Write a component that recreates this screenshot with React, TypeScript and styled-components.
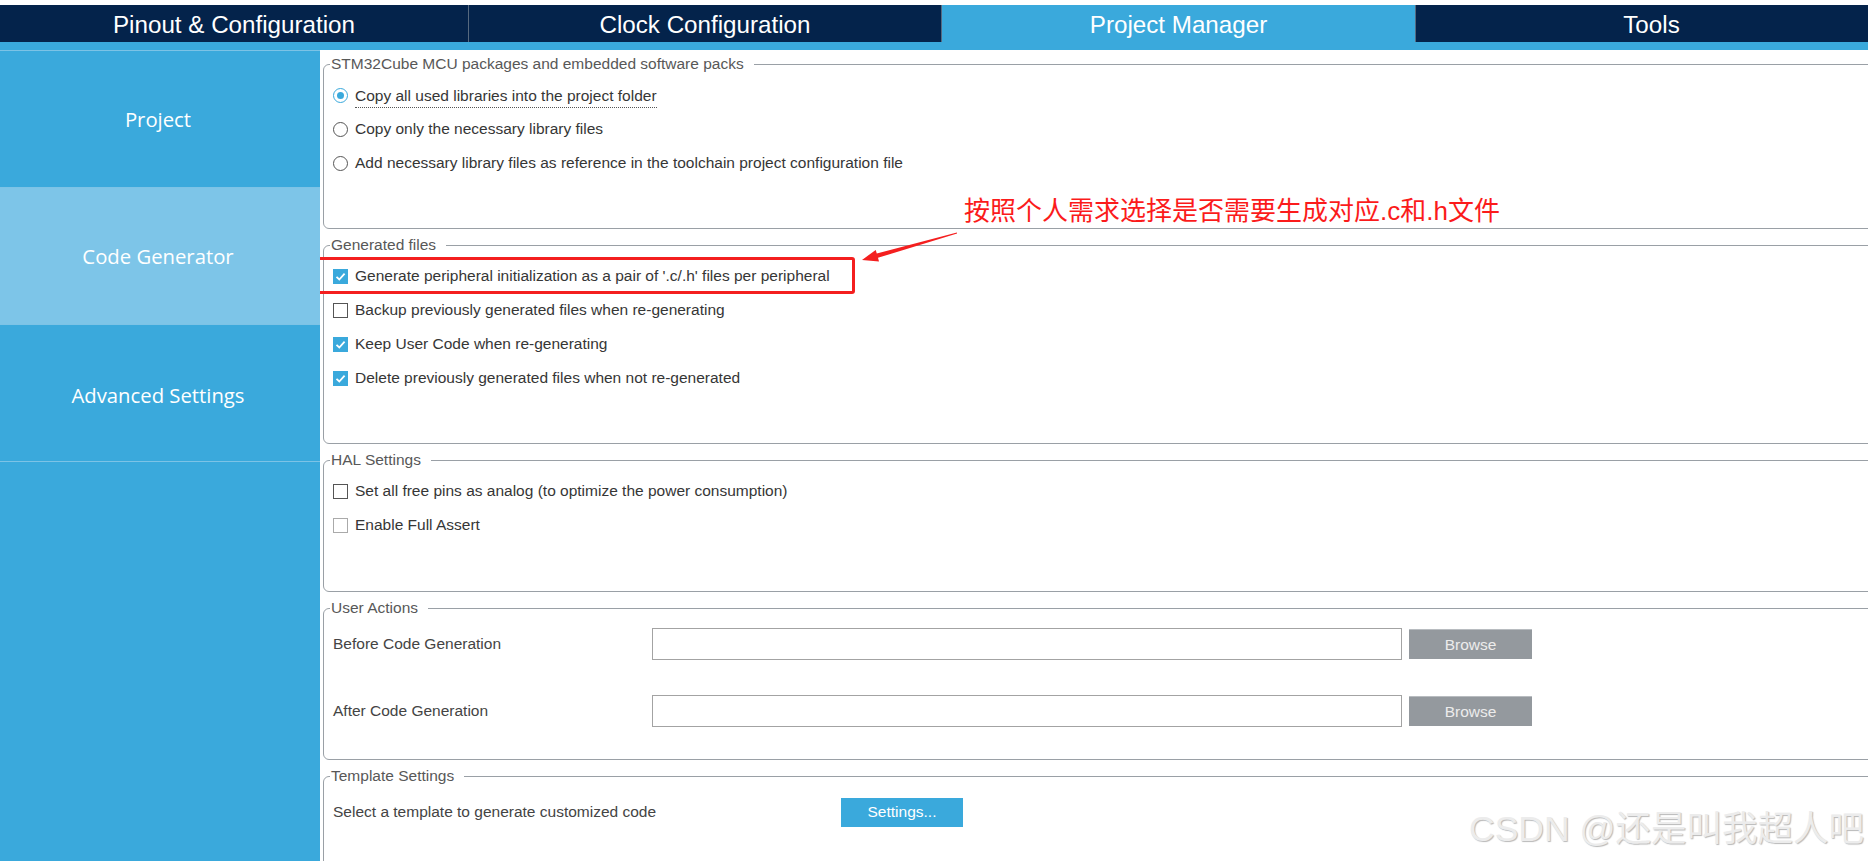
import React from "react";
import styled, { createGlobalStyle } from "styled-components";

const GlobalStyle = createGlobalStyle`
  html, body { margin: 0; padding: 0; background: #fff; }
  body { font-family: "Liberation Sans", Arial, sans-serif; }
  #root { width: 1868px; height: 861px; overflow: hidden; }
  * { box-sizing: border-box; }
`;

const BLUE = "#3aa9dc";
const NAVY = "#04234b";

const Page = styled.div`
  position: relative;
  width: 1868px;
  height: 861px;
  display: flex;
  flex-direction: column;
  background: #fff;
  overflow: hidden;
`;

const TabBar = styled.nav`
  margin-top: 5px;
  height: 37px;
  display: grid;
  grid-template-columns: 468px 473px 474px 472px;
  background: ${NAVY};
`;

const Tab = styled.div<{ $active?: boolean }>`
  display: flex;
  align-items: center;
  justify-content: center;
  padding-top: 2px;
  font-size: 24.2px;
  color: #fff;
  background: ${(p) => (p.$active ? BLUE : NAVY)};
  border-left: 1px solid #56697f;
  &:first-child {
    border-left: none;
  }
`;

const Strip = styled.div`
  height: 8px;
  background: ${BLUE};
`;

const Body = styled.div`
  flex: 1;
  min-height: 0;
  display: grid;
  grid-template-columns: 320px 1fr;
`;

const Sidebar = styled.aside`
  background: ${BLUE};
  border-top: 1px solid #7cc3e6;
`;

const SideItem = styled.div<{ $active?: boolean }>`
  height: 137px;
  display: flex;
  align-items: center;
  justify-content: center;
  padding-right: 4px;
  font-family: "Open Sans", "Liberation Sans", sans-serif;
  font-size: 20.3px;
  color: #fff;
  background: ${(p) => (p.$active ? "#7dc5e8" : "transparent")};
  border-bottom: 1px solid #7cc3e6;
  &:last-child {
    padding-top: 4px;
  }
`;

const Content = styled.main`
  overflow: hidden;
  padding: 5px 0 0 3px;
  display: flex;
  flex-direction: column;
  gap: 7px;
  background: #fff;
`;

const Group = styled.fieldset<{ $h: number }>`
  margin: 0 -20px 0 0;
  padding: 0 0 0 9px;
  height: ${(p) => p.$h}px;
  flex-shrink: 0;
  min-width: 0;
  border: 1px solid #9aa0a6;
  border-radius: 6px;
`;

const Legend = styled.legend`
  font-size: 15.5px;
  line-height: 18px;
  color: #585858;
  padding: 0 10px 0 1px;
  margin-left: -3px;
`;

const OptionList = styled.div`
  display: flex;
  flex-direction: column;
  padding-top: 5px;
`;

const Option = styled.label`
  position: relative;
  height: 34px;
  display: flex;
  align-items: center;
  gap: 7px;
  font-size: 15.5px;
  color: #363636;
`;

const FocusText = styled.span`
  padding-bottom: 2px;
  border-bottom: 1px dotted #555;
  margin-top: 4px;
`;

const Radio = styled.span<{ $checked?: boolean }>`
  width: 15px;
  height: 15px;
  border-radius: 50%;
  flex-shrink: 0;
  border: 1.5px solid ${(p) => (p.$checked ? BLUE : "#555")};
  background: #fff;
  display: flex;
  align-items: center;
  justify-content: center;
  &::after {
    content: "";
    display: ${(p) => (p.$checked ? "block" : "none")};
    width: 7px;
    height: 7px;
    border-radius: 50%;
    background: ${BLUE};
  }
`;

const Box = styled.span<{ $checked?: boolean; $dim?: boolean }>`
  width: 15px;
  height: 15px;
  flex-shrink: 0;
  display: flex;
  align-items: center;
  justify-content: center;
  background: ${(p) => (p.$checked ? BLUE : "#fff")};
  border: ${(p) =>
    p.$checked ? "none" : `1.5px solid ${p.$dim ? "#aaa" : "#555"}`};
`;

const Highlight = styled.span`
  position: absolute;
  left: -21px;
  top: -2px;
  width: 543px;
  height: 37px;
  border: 3px solid #f41f1f;
  border-radius: 3px;
  pointer-events: none;
`;

const FieldList = styled.div<{ $pt: number; $gap: number }>`
  display: flex;
  flex-direction: column;
  padding-top: ${(p) => p.$pt}px;
  gap: ${(p) => p.$gap}px;
`;

const FieldRow = styled.div<{ $cols: string }>`
  display: grid;
  grid-template-columns: ${(p) => p.$cols};
  column-gap: 7px;
  align-items: center;
  height: 32px;
  font-size: 15.5px;
  color: #444;
`;

const PathInput = styled.div`
  height: 32px;
  border: 1px solid #a3a3a3;
  background: #fff;
`;

const GreyButton = styled.div`
  height: 30px;
  display: flex;
  align-items: center;
  justify-content: center;
  background: #94999e;
  border-top: 1px solid #b8bcc0;
  color: #ececec;
  font-size: 15.5px;
`;

const BlueButton = styled.div`
  width: 122px;
  height: 29px;
  display: flex;
  align-items: center;
  justify-content: center;
  background: ${BLUE};
  color: #fff;
  font-size: 15.5px;
`;

const Note = styled.div`
  position: absolute;
  left: 964px;
  top: 196px;
  font-family: "Liberation Sans", "Noto Sans CJK SC", sans-serif;
  font-size: 26px;
  line-height: 30px;
  color: #fb1b1b;
  white-space: nowrap;
`;

const ArrowSvg = styled.svg`
  position: absolute;
  left: 855px;
  top: 226px;
`;

const Watermark = styled.div`
  position: absolute;
  right: 4px;
  bottom: 12px;
  font-family: "Liberation Sans", "Noto Sans CJK SC", sans-serif;
  font-size: 35.5px;
  line-height: 40px;
  color: #ececec;
  text-shadow: 1px 1px 1px #b9b9b9;
  white-space: nowrap;
`;

const Check = () => (
  <svg width="11" height="11" viewBox="0 0 11 11">
    <polyline
      points="1.5,5.8 4.3,8.5 9.6,2.6"
      fill="none"
      stroke="#fff"
      strokeWidth="1.8"
    />
  </svg>
);

const CheckOption = ({
  checked,
  dim,
  children,
  highlight,
}: {
  checked?: boolean;
  dim?: boolean;
  children: React.ReactNode;
  highlight?: boolean;
}) => (
  <Option>
    <Box $checked={checked} $dim={dim}>
      {checked && <Check />}
    </Box>
    {children}
    {highlight && <Highlight />}
  </Option>
);

export default function App() {
  return (
    <Page>
      <GlobalStyle />
      <TabBar>
        <Tab>Pinout &amp; Configuration</Tab>
        <Tab>Clock Configuration</Tab>
        <Tab $active>Project Manager</Tab>
        <Tab>Tools</Tab>
      </TabBar>
      <Strip />
      <Body>
        <Sidebar>
          <SideItem>Project</SideItem>
          <SideItem $active>Code Generator</SideItem>
          <SideItem>Advanced Settings</SideItem>
        </Sidebar>
        <Content>
          <Group $h={174}>
            <Legend>STM32Cube MCU packages and embedded software packs</Legend>
            <OptionList>
              <Option>
                <Radio $checked />
                <FocusText>Copy all used libraries into the project folder</FocusText>
              </Option>
              <Option>
                <Radio />
                Copy only the necessary library files
              </Option>
              <Option>
                <Radio />
                Add necessary library files as reference in the toolchain project configuration file
              </Option>
            </OptionList>
          </Group>
          <Group $h={208}>
            <Legend>Generated files</Legend>
            <OptionList>
              <CheckOption checked highlight>
                Generate peripheral initialization as a pair of '.c/.h' files per peripheral
              </CheckOption>
              <CheckOption>Backup previously generated files when re-generating</CheckOption>
              <CheckOption checked>Keep User Code when re-generating</CheckOption>
              <CheckOption checked>Delete previously generated files when not re-generated</CheckOption>
            </OptionList>
          </Group>
          <Group $h={141}>
            <Legend>HAL Settings</Legend>
            <OptionList>
              <CheckOption>Set all free pins as analog (to optimize the power consumption)</CheckOption>
              <CheckOption dim>Enable Full Assert</CheckOption>
            </OptionList>
          </Group>
          <Group $h={161}>
            <Legend>User Actions</Legend>
            <FieldList $pt={11} $gap={35}>
              <FieldRow $cols="312px 750px 123px">
                <span>Before Code Generation</span>
                <PathInput />
                <GreyButton>Browse</GreyButton>
              </FieldRow>
              <FieldRow $cols="312px 750px 123px">
                <span>After Code Generation</span>
                <PathInput />
                <GreyButton>Browse</GreyButton>
              </FieldRow>
            </FieldList>
          </Group>
          <Group $h={130}>
            <Legend>Template Settings</Legend>
            <FieldList $pt={11} $gap={0}>
              <FieldRow $cols="501px 122px">
                <span>Select a template to generate customized code</span>
                <BlueButton>Settings...</BlueButton>
              </FieldRow>
            </FieldList>
          </Group>
        </Content>
      </Body>
      <Note>按照个人需求选择是否需要生成对应.c和.h文件</Note>
      <ArrowSvg width="110" height="45" viewBox="0 0 110 45">
        <polygon
          points="101.9,6.6 21.8,27.5 20.7,23.9 7,34 24,35.4 23,31.8 102.1,7.4"
          fill="#f41f1f"
        />
      </ArrowSvg>
      <Watermark>CSDN @还是叫我超人吧</Watermark>
    </Page>
  );
}
